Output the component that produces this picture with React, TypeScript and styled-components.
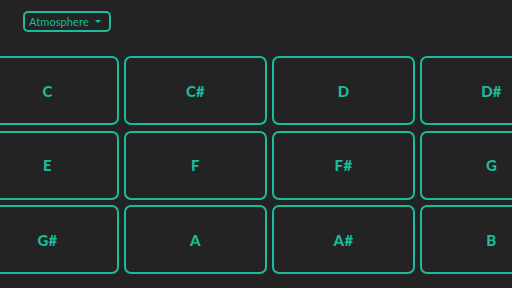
import React from "react";
import styled, { createGlobalStyle } from "styled-components";

const Global = createGlobalStyle`
  html, body { margin: 0; padding: 0; background: #232323; overflow: hidden; }
  body { width: 512px; height: 288px; font-family: "Lato", "Noto Sans", sans-serif; }
`;

const Page = styled.div`
  width: 512px;
  height: 288px;
  overflow: hidden;
  background: #232323;
  display: flex;
  flex-direction: column;
`;

const Toolbar = styled.div`
  display: flex;
  padding: 11px 0 0 23px;
  height: 45px;
  box-sizing: border-box;
`;

const Select = styled.button`
  display: flex;
  align-items: center;
  gap: 6px;
  height: 21px;
  box-sizing: border-box;
  padding: 0 8px 0 4px;
  background: transparent;
  border: 2px solid #1abc9c;
  border-radius: 5px;
  color: #1abc9c;
  font-family: "Lato", "Noto Sans", sans-serif;
  font-size: 11px;
  font-weight: 400;
  letter-spacing: 0.1px;
  cursor: pointer;
`;

const Caret = styled.span`
  width: 0;
  height: 0;
  border-left: 3.5px solid transparent;
  border-right: 3.5px solid transparent;
  border-top: 3.5px solid #1abc9c;
`;

const Grid = styled.div`
  display: grid;
  grid-template-columns: repeat(4, 143px);
  grid-auto-rows: 69px;
  column-gap: 5px;
  row-gap: 5.5px;
  margin-left: -24px;
  margin-top: 11px;
`;

const Pad = styled.div`
  box-sizing: border-box;
  border: 2px solid #1abc9c;
  border-radius: 7px;
  display: flex;
  align-items: center;
  justify-content: center;
  color: #1abc9c;
  font-family: "Lato", "Noto Sans", sans-serif;
  font-weight: 900;
  font-size: 15px;
  letter-spacing: 0.3px;
`;

const notes = ["C", "C#", "D", "D#", "E", "F", "F#", "G", "G#", "A", "A#", "B"];

export default function App() {
  return (
    <Page>
      <Global />
      <Toolbar>
        <Select>
          Atmosphere
          <Caret />
        </Select>
      </Toolbar>
      <Grid>
        {notes.map((n) => (
          <Pad key={n}>{n}</Pad>
        ))}
      </Grid>
    </Page>
  );
}
